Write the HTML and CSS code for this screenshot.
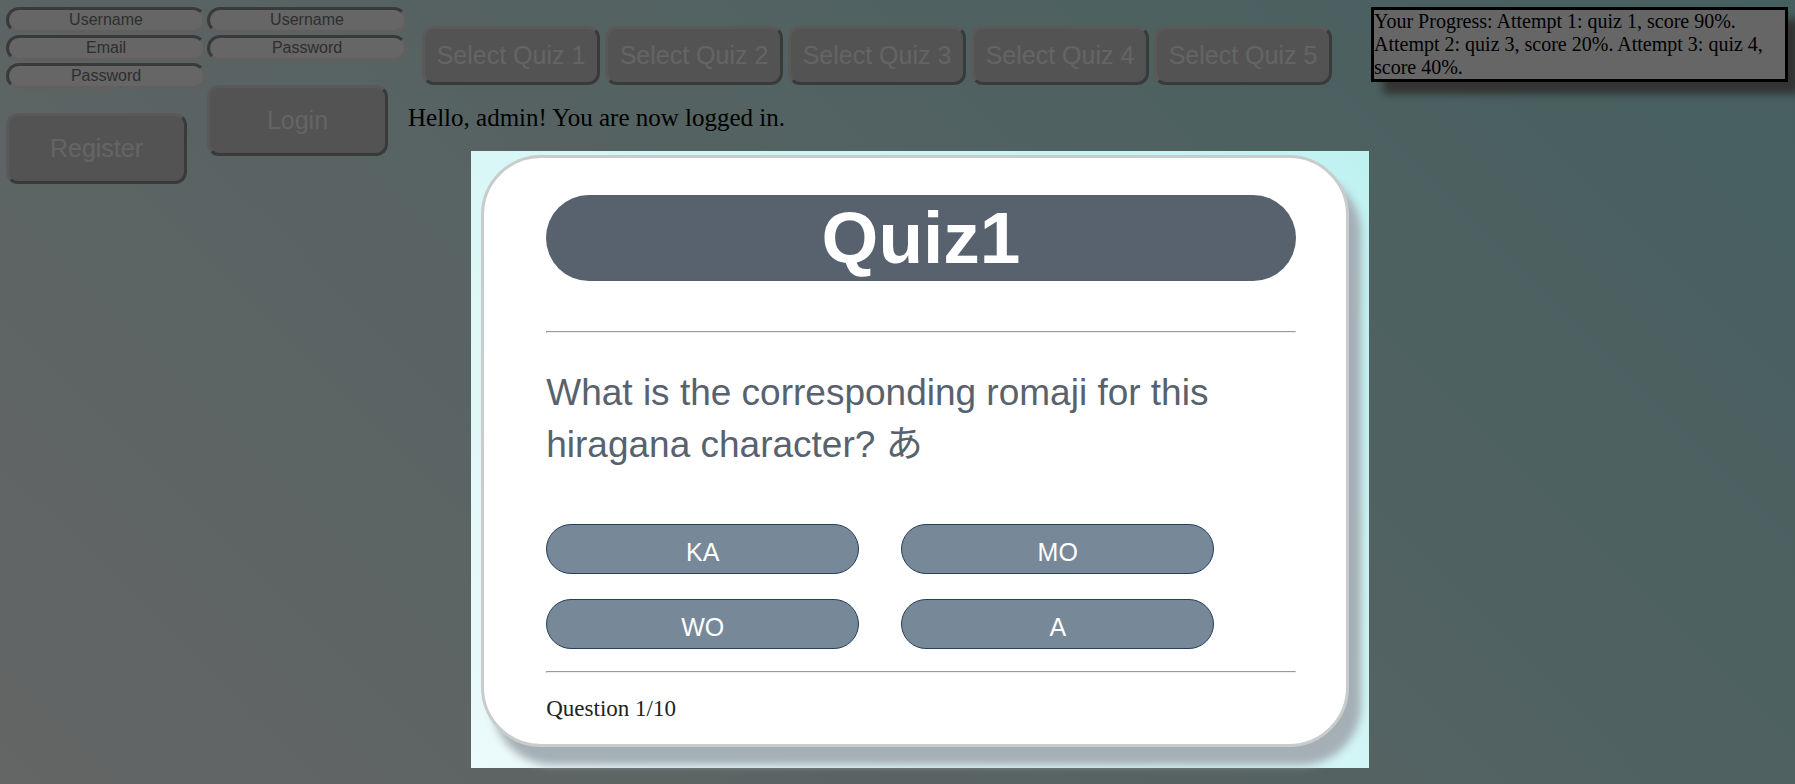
FILE: index.html
```html
<!DOCTYPE html>
<html lang="en">
<head>
<meta charset="utf-8">
<title>Quiz</title>
<link rel="stylesheet" href="styles.css">
</head>
<body>
<div class="page">
  <header class="top">
    <form class="account">
      <input class="field" type="text" placeholder="Username" aria-label="New username">
      <input class="field" type="email" placeholder="Email" aria-label="Email">
      <input class="field" type="password" placeholder="Password" aria-label="New password">
      <button class="btn submit" type="button">Register</button>
    </form>
    <form class="account">
      <input class="field" type="text" placeholder="Username" aria-label="Username">
      <input class="field" type="password" placeholder="Password" aria-label="Password">
      <button class="btn submit" type="button">Login</button>
    </form>
    <div class="center">
      <nav class="quizzes">
        <button class="btn pick" type="button">Select Quiz 1</button>
        <button class="btn pick" type="button">Select Quiz 2</button>
        <button class="btn pick" type="button">Select Quiz 3</button>
        <button class="btn pick" type="button">Select Quiz 4</button>
        <button class="btn pick" type="button">Select Quiz 5</button>
      </nav>
      <p class="hello">Hello, admin! You are now logged in.</p>
    </div>
    <div class="progress">Your Progress: Attempt 1: quiz 1, score 90%. Attempt 2: quiz 3, score 20%. Attempt 3: quiz 4, score 40%.</div>
  </header>
</div>
<div class="layer">
  <main class="modal">
    <section class="card">
      <h1 class="title">Quiz1</h1>
      <hr class="rule">
      <p class="question">What is the corresponding romaji for this hiragana character? あ</p>
      <div class="answers">
        <button class="answer" type="button">KA</button>
        <button class="answer" type="button">MO</button>
        <button class="answer" type="button">WO</button>
        <button class="answer" type="button">A</button>
      </div>
      <hr class="rule">
      <footer class="count">Question 1/10</footer>
    </section>
  </main>
</div>
</body>
</html>
```
FILE: styles.css
```css
* { box-sizing: border-box; }

body {
  margin: 0;
  min-height: 100vh;
  overflow: hidden;
  font-family: "Liberation Serif", serif;
  background: linear-gradient(45deg, #fafdfd, #afeeee) fixed;
}

.page { padding: 7px 7px 7px 6px; }

.top {
  display: flex;
  align-items: flex-start;
  gap: 1px;
}

.account {
  display: flex;
  flex-direction: column;
  align-items: flex-start;
  gap: 2px;
  width: 200px;
}

.field {
  width: 100%;
  height: 26px;
  padding: 0 2px;
  border: 3px solid;
  border-color: #929292 #f6eeee #f6eeee #929292;
  border-radius: 13px;
  background: #fff;
  font: 16px "Liberation Sans", Arial, sans-serif;
  text-align: center;
}

.field::placeholder { color: #757575; }

.btn {
  border: 3px solid;
  border-color: #e4dcdc #8e9292 #8e9292 #e4dcdc;
  border-radius: 12px;
  background: #d0d0d0;
  color: #fafafa;
  font: 25px "Liberation Sans", Arial, sans-serif;
}

.submit {
  width: 181px;
  height: 71px;
  margin-top: 22px;
}

.center {
  flex: 1;
  padding-top: 19px;
}

.quizzes {
  display: flex;
  gap: 5px;
  padding-left: 14px;
}

.pick {
  width: 178px;
  height: 59px;
  padding: 0;
}

.hello {
  margin: 19px 0 0;
  font-size: 25px;
}

.progress {
  width: 417px;
  border: 3px solid #000;
  background: #fff;
  box-shadow: 12px 12px 8px #808080;
  font-size: 20px;
  line-height: 23px;
}

.layer {
  position: absolute;
  inset: 0;
  display: flex;
  justify-content: center;
  align-items: flex-start;
  padding: 151px 0 0 45px;
  overflow: hidden;
}

.modal {
  width: 50vw;
  padding: 4px 20px 21px 10px;
  box-shadow: 0 0 0 100vmax rgba(0, 0, 0, 0.6);
}

.card {
  padding: 37px 50px 22px 62px;
  border: 3px solid #c8cccc;
  border-radius: 60px;
  background: #fff;
  box-shadow: 12px 18px 8px #a5afb6;
}

.title {
  margin: 0;
  border-radius: 43px;
  background: #57626e;
  color: #fff;
  font: bold 73px/86px "Liberation Sans", Arial, sans-serif;
  text-align: center;
}

.rule { margin: 50px 0 0; }

.question {
  margin: 34px 0 53px;
  color: #57626e;
  font: 37px/52px "Liberation Sans", "Noto Sans CJK JP", sans-serif;
}

.answers {
  display: grid;
  grid-template-columns: repeat(2, 313px);
  gap: 25px 42px;
}

.answer {
  height: 50px;
  padding: 6px 0 0;
  border: 1px solid #24405c;
  border-radius: 25px;
  background: #778899;
  color: #fff;
  font: 25px "Liberation Sans", Arial, sans-serif;
}

.answers + .rule { margin-top: 22px; }

.count {
  margin-top: 23px;
  color: #222;
  font-size: 23px;
}
```
